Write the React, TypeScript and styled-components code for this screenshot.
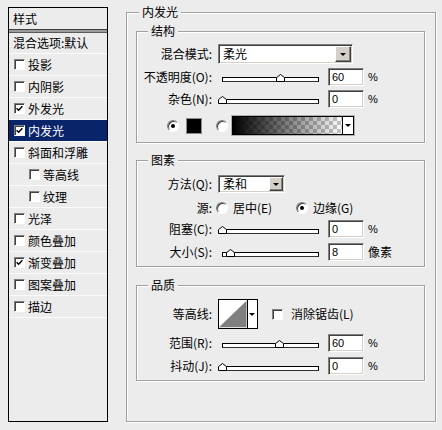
import React from "react";
import styled, { createGlobalStyle, css } from "styled-components";

const BG = "#ececec";

const GlobalStyle = createGlobalStyle`
  html, body { margin: 0; padding: 0; background: ${BG}; }
  body {
    font-family: "Noto Sans CJK SC", "Noto Sans", sans-serif;
    font-size: 12px;
    line-height: 14px;
    color: #000;
    overflow: hidden;
  }
`;

const sunken = css`
  box-sizing: border-box;
  border: 1px solid;
  border-color: #808080 #fff #fff #808080;
  box-shadow: inset 1px 1px 0 #404040, inset -1px -1px 0 #d4d0c8;
  background: #fff;
`;

const Dialog = styled.div`
  width: 442px;
  height: 430px;
  display: flex;
  align-items: flex-start;
  background: ${BG};
`;

/* ---------- left: style list ---------- */

const StyleList = styled.div`
  box-sizing: border-box;
  width: 100px;
  height: 415px;
  margin: 7px 0 0 8px;
  border: 1px solid #000;
  display: flex;
  flex-direction: column;
`;

const ListHeader = styled.div`
  height: 21px;
  line-height: 21px;
  padding-left: 4px;
`;

const HeaderRule = styled.div`
  height: 2px;
  background: #9c9c9c;
  border-top: 1px solid #404040;
  border-bottom: 1px solid #5a5a5a;
`;

const ListItem = styled.div<{ $level?: number; $selected?: boolean; $h?: number }>`
  height: ${(p) => p.$h ?? 21}px;
  display: flex;
  align-items: center;
  gap: 3px;
  padding-left: ${(p) => (p.$level ? 20 : 5)}px;
  border-bottom: 1px solid #fbfbfb;
  background: ${(p) => (p.$selected ? "#0a246a" : "transparent")};
  color: ${(p) => (p.$selected ? "#fff" : "#000")};
  white-space: nowrap;
`;

const BlendItem = styled(ListItem)`
  padding-left: 4px;
`;

const CheckBox = styled.span<{ $ml?: number }>`
  box-sizing: border-box;
  width: 11px;
  height: 11px;
  flex: none;
  margin-left: ${(p) => p.$ml ?? 0}px;
  background: #fff;
  border: 1px solid;
  border-color: #808080 #fff #fff #808080;
  box-shadow: inset 1px 1px 0 #404040;
  display: flex;
  align-items: center;
  justify-content: center;
`;

const Check = ({ on, ml }: { on?: boolean; ml?: number }) => (
  <CheckBox $ml={ml}>
    {on && (
      <svg width="7" height="7" viewBox="0 0 7 7">
        <path d="M0.6 3.2 L2.6 5.2 L6.4 1.2" fill="none" stroke="#000" strokeWidth="1.5" />
      </svg>
    )}
  </CheckBox>
);

/* ---------- right: groups ---------- */

const etched = css`
  box-sizing: border-box;
  border: 1px solid #a0a0a0;
  box-shadow: inset 1px 1px 0 #fff, 1px 1px 0 #fff;
  min-width: 0;
`;

const OuterGroup = styled.fieldset`
  ${etched};
  width: 310px;
  height: 417px;
  margin: 5px 0 0 18px;
  padding: 0 10px 0 9px;
`;

const Group = styled.fieldset<{ $mt: number; $pb: number }>`
  ${etched};
  width: 289px;
  margin: ${(p) => p.$mt}px 0 0 0;
  padding: 0 0 ${(p) => p.$pb}px 0;
`;

const Legend = styled.legend<{ $ml: number }>`
  margin-left: ${(p) => p.$ml}px;
  padding: 0 3px;
  height: 14px;
  line-height: 14px;
  background: ${BG};
`;

const Row = styled.div<{ $mt: number; $h: number; $pl?: number }>`
  display: flex;
  align-items: center;
  height: ${(p) => p.$h}px;
  margin-top: ${(p) => p.$mt}px;
  padding-left: ${(p) => p.$pl ?? 0}px;
  white-space: nowrap;
`;

const Label = styled.span`
  flex: none;
  width: 75px;
  margin-right: 6px;
  text-align: right;
`;

const Select = styled.div<{ $w: number; $h: number }>`
  ${sunken};
  width: ${(p) => p.$w}px;
  height: ${(p) => p.$h}px;
  padding: 1px;
  display: flex;
  align-items: stretch;
`;

const SelectText = styled.span`
  flex: 1;
  display: flex;
  align-items: center;
  padding-left: 3px;
`;

const arrow = css`
  content: "";
  border-left: 3px solid transparent;
  border-right: 3px solid transparent;
  border-top: 3px solid #000;
`;

const DropButton = styled.span<{ $w: number }>`
  box-sizing: border-box;
  width: ${(p) => p.$w}px;
  background: #d4d0c8;
  border: 1px solid;
  border-color: #fff #404040 #404040 #fff;
  box-shadow: inset -1px -1px 0 #808080;
  display: flex;
  align-items: center;
  justify-content: center;
  &::after {
    ${arrow};
  }
`;

const NumField = styled.span<{ $ml?: number }>`
  ${sunken};
  width: 36px;
  height: 18px;
  margin-left: ${(p) => p.$ml ?? 4}px;
  padding-left: 3px;
  font-family: "Liberation Sans", Arial, sans-serif;
  font-size: 11px;
  line-height: 16px;
`;

const Unit = styled.span<{ $cjk?: boolean }>`
  margin-left: 4px;
  font-family: ${(p) => (p.$cjk ? `"Noto Sans CJK SC", sans-serif` : `"Liberation Sans", Arial, sans-serif`)};
  font-size: ${(p) => (p.$cjk ? 12 : 11)}px;
`;

const SliderWrap = styled.div`
  position: relative;
  flex: none;
  width: 106px;
  height: 18px;
`;

const Track = styled.div`
  box-sizing: border-box;
  width: 97px;
  height: 5px;
  margin: 9px 0 0 4px;
  background: #fff;
  border: 1px solid #000;
  border-bottom-color: #303030;
`;

const Thumb = styled.svg`
  position: absolute;
  top: 6px;
`;

const Slider = ({ at }: { at: number }) => (
  <SliderWrap>
    <Track />
    <Thumb width="9" height="8" viewBox="0 0 9 8" style={{ left: Math.round(4 + at * 97 - 4) }}>
      <path d="M0.5 7.5 V3.6 L4.5 0.5 L8.5 3.6 V7.5 Z" fill="#fff" stroke="#000" />
    </Thumb>
  </SliderWrap>
);

const RadioDot = styled.span<{ $on?: boolean; $ml?: number }>`
  box-sizing: border-box;
  flex: none;
  width: 12px;
  height: 12px;
  margin-left: ${(p) => p.$ml ?? 0}px;
  border-radius: 50%;
  border: 1px solid;
  border-color: #808080 #fff #fff #808080;
  box-shadow: inset 1px 1px 0 #404040;
  background: #fff;
  display: flex;
  align-items: center;
  justify-content: center;
  &::after {
    content: "";
    width: 4px;
    height: 4px;
    border-radius: 50%;
    background: ${(p) => (p.$on ? "#000" : "transparent")};
  }
`;

const Option = styled.span<{ $w?: number }>`
  display: flex;
  align-items: center;
  gap: 5px;
  width: ${(p) => (p.$w ? `${p.$w}px` : "auto")};
`;

const ColorSwatch = styled.span`
  box-sizing: border-box;
  width: 16px;
  height: 16px;
  margin: 0 14px 0 7px;
  background: #000;
  border: 1px solid #8a8a8a;
`;

const GradientPicker = styled.div`
  box-sizing: border-box;
  width: 122px;
  height: 19px;
  margin-left: 4px;
  border: 1px solid #000;
  box-shadow: 0 0 0 1px #b0b0b0;
  display: flex;
`;

const GradientFill = styled.span`
  flex: 1;
  background: linear-gradient(to right, #000, rgba(0, 0, 0, 0)),
    repeating-conic-gradient(#c4c4c4 0 25%, #fff 0 50%) 0 0 / 8px 8px;
`;

const PickerArrow = styled.span`
  width: 10px;
  background: #fff;
  border-left: 1px solid #000;
  display: flex;
  align-items: center;
  justify-content: center;
  &::after {
    ${arrow};
  }
`;

const ContourPicker = styled.div`
  box-sizing: border-box;
  width: 40px;
  height: 30px;
  border: 1px solid #000;
  background: #fff;
  display: flex;
`;

const ContourPreview = styled.svg`
  display: block;
`;

const CheckLabel = styled.span`
  margin-left: 8px;
`;

const items = [
  { label: "投影" },
  { label: "内阴影" },
  { label: "外发光", checked: true },
  { label: "内发光", checked: true, selected: true },
  { label: "斜面和浮雕" },
  { label: "等高线", level: 1 },
  { label: "纹理", level: 1 },
  { label: "光泽" },
  { label: "颜色叠加" },
  { label: "渐变叠加", checked: true },
  { label: "图案叠加" },
  { label: "描边" },
];

export default function App() {
  return (
    <>
      <GlobalStyle />
      <Dialog>
        <StyleList>
          <ListHeader>样式</ListHeader>
          <HeaderRule />
          <BlendItem $h={20}>混合选项:默认</BlendItem>
          {items.map((it) => (
            <ListItem key={it.label} $level={it.level} $selected={it.selected}>
              <Check on={it.checked} />
              <span>{it.label}</span>
            </ListItem>
          ))}
        </StyleList>

        <OuterGroup>
          <Legend $ml={3}>内发光</Legend>

          <Group $mt={5} $pb={7}>
            <Legend $ml={11}>结构</Legend>
            <Row $mt={6} $h={20}>
              <Label>混合模式:</Label>
              <Select $w={135} $h={20}>
                <SelectText>柔光</SelectText>
                <DropButton $w={16} />
              </Select>
            </Row>
            <Row $mt={4} $h={18}>
              <Label>不透明度(O):</Label>
              <Slider at={0.6} />
              <NumField>60</NumField>
              <Unit>%</Unit>
            </Row>
            <Row $mt={4} $h={18}>
              <Label>杂色(N):</Label>
              <Slider at={0} />
              <NumField>0</NumField>
              <Unit>%</Unit>
            </Row>
            <Row $mt={8} $h={19} $pl={30}>
              <RadioDot $on />
              <ColorSwatch />
              <RadioDot />
              <GradientPicker>
                <GradientFill />
                <PickerArrow />
              </GradientPicker>
            </Row>
          </Group>

          <Group $mt={10} $pb={5}>
            <Legend $ml={11}>图素</Legend>
            <Row $mt={8} $h={18}>
              <Label>方法(Q):</Label>
              <Select $w={67} $h={18}>
                <SelectText>柔和</SelectText>
                <DropButton $w={14} />
              </Select>
            </Row>
            <Row $mt={9} $h={12}>
              <Label>源:</Label>
              <Option $w={78}>
                <RadioDot $ml={-2} />
                居中(E)
              </Option>
              <Option>
                <RadioDot $on />
                边缘(G)
              </Option>
            </Row>
            <Row $mt={6} $h={18}>
              <Label>阻塞(C):</Label>
              <Slider at={0} />
              <NumField>0</NumField>
              <Unit>%</Unit>
            </Row>
            <Row $mt={5} $h={18}>
              <Label>大小(S):</Label>
              <Slider at={0.08} />
              <NumField>8</NumField>
              <Unit $cjk>像素</Unit>
            </Row>
          </Group>

          <Group $mt={11} $pb={5}>
            <Legend $ml={11}>品质</Legend>
            <Row $mt={7} $h={30}>
              <Label>等高线:</Label>
              <ContourPicker>
                <ContourPreview width="29" height="28" viewBox="0 0 29 28">
                  <polygon points="0,28 29,0 29,28" fill="#808080" />
                </ContourPreview>
                <PickerArrow />
              </ContourPicker>
              <Check ml={14} />
              <CheckLabel>消除锯齿(L)</CheckLabel>
            </Row>
            <Row $mt={5} $h={18}>
              <Label>范围(R):</Label>
              <Slider at={0.59} />
              <NumField>60</NumField>
              <Unit>%</Unit>
            </Row>
            <Row $mt={5} $h={18}>
              <Label>抖动(J):</Label>
              <Slider at={0} />
              <NumField>0</NumField>
              <Unit>%</Unit>
            </Row>
          </Group>
        </OuterGroup>
      </Dialog>
    </>
  );
}
